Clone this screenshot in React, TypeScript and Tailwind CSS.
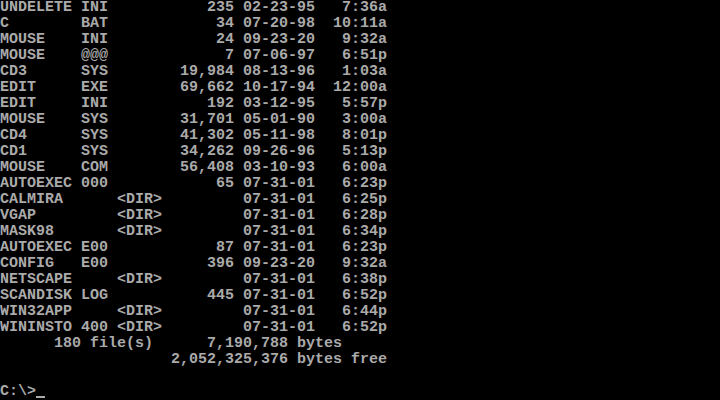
import React from 'react'

type Entry = { name: string; ext: string; size?: string; dir?: boolean; date: string; time: string }

const ENTRIES: Entry[] = [
  { name: 'UNDELETE', ext: 'INI', size: '235', date: '02-23-95', time: '7:36a' },
  { name: 'C', ext: 'BAT', size: '34', date: '07-20-98', time: '10:11a' },
  { name: 'MOUSE', ext: 'INI', size: '24', date: '09-23-20', time: '9:32a' },
  { name: 'MOUSE', ext: '@@@', size: '7', date: '07-06-97', time: '6:51p' },
  { name: 'CD3', ext: 'SYS', size: '19,984', date: '08-13-96', time: '1:03a' },
  { name: 'EDIT', ext: 'EXE', size: '69,662', date: '10-17-94', time: '12:00a' },
  { name: 'EDIT', ext: 'INI', size: '192', date: '03-12-95', time: '5:57p' },
  { name: 'MOUSE', ext: 'SYS', size: '31,701', date: '05-01-90', time: '3:00a' },
  { name: 'CD4', ext: 'SYS', size: '41,302', date: '05-11-98', time: '8:01p' },
  { name: 'CD1', ext: 'SYS', size: '34,262', date: '09-26-96', time: '5:13p' },
  { name: 'MOUSE', ext: 'COM', size: '56,408', date: '03-10-93', time: '6:00a' },
  { name: 'AUTOEXEC', ext: '000', size: '65', date: '07-31-01', time: '6:23p' },
  { name: 'CALMIRA', ext: '', dir: true, date: '07-31-01', time: '6:25p' },
  { name: 'VGAP', ext: '', dir: true, date: '07-31-01', time: '6:28p' },
  { name: 'MASK98', ext: '', dir: true, date: '07-31-01', time: '6:34p' },
  { name: 'AUTOEXEC', ext: 'E00', size: '87', date: '07-31-01', time: '6:23p' },
  { name: 'CONFIG', ext: 'E00', size: '396', date: '09-23-20', time: '9:32a' },
  { name: 'NETSCAPE', ext: '', dir: true, date: '07-31-01', time: '6:38p' },
  { name: 'SCANDISK', ext: 'LOG', size: '445', date: '07-31-01', time: '6:52p' },
  { name: 'WIN32APP', ext: '', dir: true, date: '07-31-01', time: '6:44p' },
  { name: 'WININSTO', ext: '400', dir: true, date: '07-31-01', time: '6:52p' },
]

// classic 8.3 dir line
const fmt = (e: Entry) =>
  e.name.padEnd(8) +
  ' ' +
  e.ext.padEnd(3) +
  (e.dir ? ' <DIR>'.padEnd(14) : (e.size ?? '').padStart(14)) +
  ' ' +
  e.date +
  e.time.padStart(8)

const lines = [
  ...ENTRIES.map(fmt),
  '      180 file(s)      7,190,788 bytes',
  '                   2,052,325,376 bytes free',
  '',
]

export default function App() {
  return (
    <div className="w-[720px] h-[400px] bg-black overflow-hidden text-[#aaaaaa] font-['Liberation_Mono',monospace] text-[15px] leading-[16px] font-bold">
      {lines.map((l, i) => (
        <div key={i} className="h-4 whitespace-pre">{l}</div>
      ))}
      <div className="h-4 whitespace-pre flex">
        <span>C:\&gt;</span>
        <span className="relative w-[9px]">
          <span className="absolute left-0 bottom-[2px] w-[9px] h-[2px] bg-[#aaaaaa]" />
        </span>
      </div>
    </div>
  )
}
